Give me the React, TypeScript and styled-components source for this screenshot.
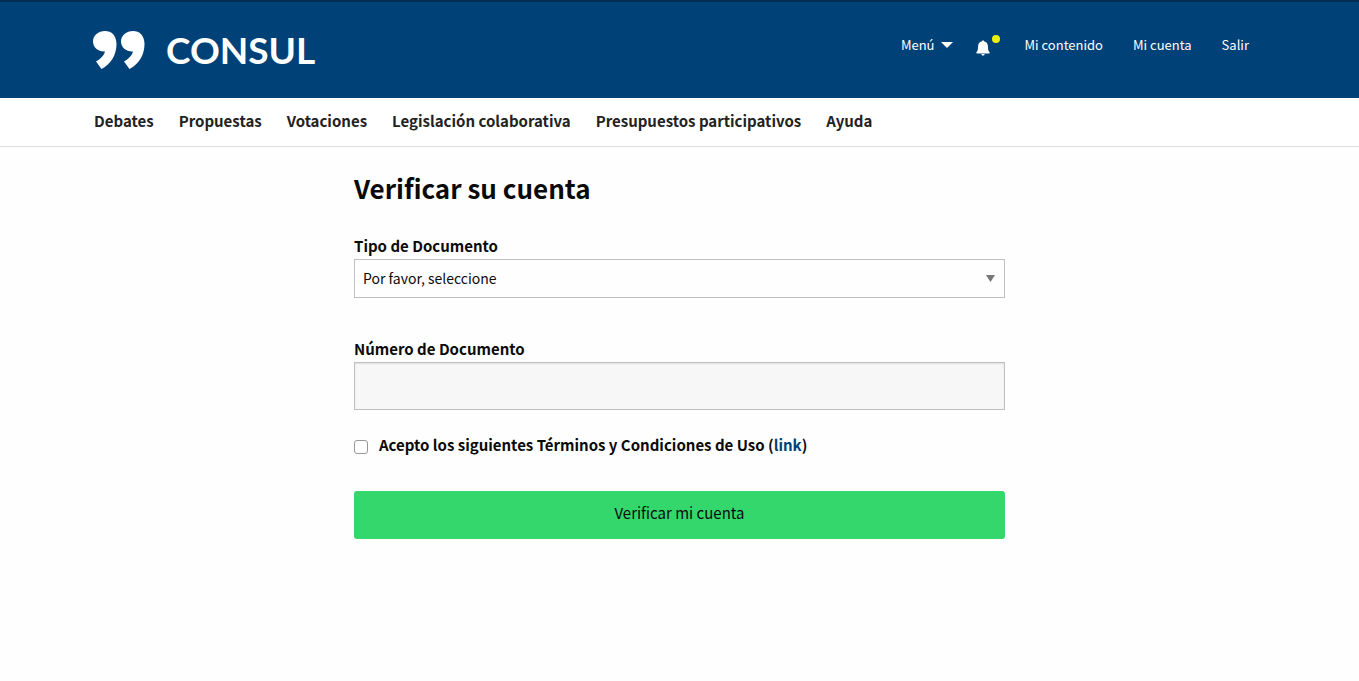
import React from "react";
import styled, { createGlobalStyle } from "styled-components";

const GlobalStyle = createGlobalStyle`
  *, *::before, *::after { box-sizing: border-box; }
  body {
    margin: 0;
    background: #fefefe;
    color: #0a0a0a;
    font-family: "Noto Sans CJK SC", "Noto Sans", sans-serif;
    font-size: 15px;
    line-height: 24px;
  }
  a { text-decoration: none; }
`;

const Container = styled.div`
  max-width: 1171px;
  margin: 0 auto;
`;

const Header = styled.header`
  background: #004178;
  border-top: 2px solid #002d54;
`;

const TopBar = styled(Container)`
  display: flex;
  justify-content: space-between;
  align-items: flex-start;
  height: 96px;
  padding-right: 16px;
`;

const Brand = styled.a`
  display: flex;
  align-items: center;
  gap: 20px;
  margin-top: 27px;
  color: #fff;
  font-family: Lato, sans-serif;
  font-size: 37px;
  font-weight: 700;
  line-height: 42px;
`;

const QuoteMark = styled.svg`
  overflow: visible;
`;

const AccountNav = styled.nav`
  display: flex;
  align-items: center;
  gap: 30px;
  margin-top: 31px;
  font-size: 13px;
`;

const AccountLink = styled.a`
  color: #fff;
`;

const MenuGroup = styled.div`
  display: flex;
  align-items: center;
  gap: 23px;
`;

const MenuButton = styled.button`
  display: flex;
  align-items: center;
  gap: 7px;
  padding: 0;
  border: 0;
  background: none;
  color: #fff;
  font: inherit;
`;

const BellLink = styled.a`
  position: relative;
  display: block;
  width: 18px;
  height: 16px;
  margin-top: 6px;
  svg { display: block; }
`;

const UnreadDot = styled.span`
  position: absolute;
  top: -5px;
  right: -6px;
  width: 8px;
  height: 8px;
  border-radius: 50%;
  background: #ecf00b;
`;

const SectionBar = styled.div`
  background: #fff;
  border-bottom: 1px solid #dedede;
`;

const SectionNav = styled(Container).attrs({ as: "nav" })`
  display: flex;
  flex-wrap: wrap;
  gap: 25px;
  padding: 11px 0 13px;
`;

const SectionLink = styled.a`
  color: #222;
  font-weight: 700;
`;

const Main = styled.main`
  max-width: 651px;
  margin: 0 auto;
  padding-top: 21px;
`;

const Title = styled.h1`
  margin: 0 0 26px;
  font-size: 26px;
  font-weight: 700;
  line-height: 40px;
`;

const Field = styled.div<{ $gap: number }>`
  margin-bottom: ${(p) => p.$gap}px;
`;

const Label = styled.label`
  display: block;
  font-weight: 700;
`;

const SelectWrap = styled.div`
  position: relative;
  margin-top: 1px;
  svg {
    position: absolute;
    top: 16px;
    right: 10px;
    pointer-events: none;
  }
`;

const Select = styled.select`
  display: block;
  width: 100%;
  height: 39px;
  padding: 0 24px 2px 8px;
  appearance: none;
  border: 1px solid #c0c0c0;
  border-radius: 0;
  background: #fefefe;
  color: #0a0a0a;
  font: inherit;
  font-size: 14px;
`;

const TextInput = styled.input`
  display: block;
  width: 100%;
  height: 48px;
  margin-top: 1px;
  padding: 8px;
  border: 1px solid #c0c0c0;
  border-radius: 0;
  background: #f7f7f7;
  box-shadow: inset 0 1px 2px rgba(10, 10, 10, 0.1);
  font: inherit;
`;

const Terms = styled.div`
  display: flex;
  align-items: center;
  gap: 11px;
  margin-bottom: 34px;
  font-weight: 700;
`;

const Checkbox = styled.input`
  width: 14px;
  height: 14px;
  margin: 4px 0 0;
  appearance: none;
  border: 1px solid #999;
  border-radius: 3px;
  background: #fff;
  &:checked { background: #004178; }
`;

const TermsLink = styled.a`
  color: #004178;
`;

const Submit = styled.button`
  display: block;
  width: 100%;
  height: 48px;
  padding: 0 16px 4px;
  border: 0;
  border-radius: 3px;
  background: #34d76c;
  color: #0a0a0a;
  font: inherit;
`;

const sections = [
  "Debates",
  "Propuestas",
  "Votaciones",
  "Legislación colaborativa",
  "Presupuestos participativos",
  "Ayuda",
];

export default function App() {
  return (
    <>
      <GlobalStyle />
      <Header>
        <TopBar>
          <Brand href="#">
            <QuoteMark width="52" height="40" viewBox="0 0 52 40" fill="#fff" aria-hidden="true">
              <path d="M11 1C17.500 1 22.500 5.500 22.500 14C22.500 25 17 34 7.500 39L2 31.500C6.500 29 10 25.500 11 21.500C4.500 22 -1 17.500 -1 11.500C-1 5.500 4.500 1 11 1Z" />
              <path transform="translate(28 0)" d="M11 1C17.500 1 22.500 5.500 22.500 14C22.500 25 17 34 7.500 39L2 31.500C6.500 29 10 25.500 11 21.500C4.500 22 -1 17.500 -1 11.500C-1 5.500 4.500 1 11 1Z" />
            </QuoteMark>
            CONSUL
          </Brand>
          <AccountNav aria-label="Cuenta">
            <MenuGroup>
              <MenuButton type="button">
                Menú
                <svg width="12" height="6" viewBox="0 0 12 6" fill="#fff" aria-hidden="true">
                  <path d="M0 0H12L6 6Z" />
                </svg>
              </MenuButton>
              <BellLink href="#" aria-label="Notificaciones">
                <svg width="14" height="16" viewBox="0 0 14 16" fill="#fff" aria-hidden="true">
                  <path d="M7 .5C7.800.5 8.200 1 8.300 1.500C10.700 2 11.800 3.800 11.900 6C12 9.500 12.300 11 13.500 12V13.500H.5V12C1.700 11 2 9.500 2.100 6C2.200 3.800 3.300 2 5.700 1.500C5.800 1 6.200.5 7 .5ZM5.400 14H8.600C8.500 15 8 15.500 7 15.500C6 15.500 5.500 15 5.400 14Z" />
                </svg>
                <UnreadDot />
              </BellLink>
            </MenuGroup>
            <AccountLink href="#">Mi contenido</AccountLink>
            <AccountLink href="#">Mi cuenta</AccountLink>
            <AccountLink href="#">Salir</AccountLink>
          </AccountNav>
        </TopBar>
      </Header>
      <SectionBar>
        <SectionNav>
          {sections.map((s) => (
            <SectionLink key={s} href="#">{s}</SectionLink>
          ))}
        </SectionNav>
      </SectionBar>
      <Main>
        <Title>Verificar su cuenta</Title>
        <form>
          <Field $gap={39}>
            <Label htmlFor="document-type">Tipo de Documento</Label>
            <SelectWrap>
              <Select id="document-type">
                <option>Por favor, seleccione</option>
              </Select>
              <svg width="9" height="7" viewBox="0 0 9 7" fill="#777" aria-hidden="true">
                <path d="M0 0H9L4.500 7Z" />
              </svg>
            </SelectWrap>
          </Field>
          <Field $gap={23}>
            <Label htmlFor="document-number">Número de Documento</Label>
            <TextInput id="document-number" type="text" />
          </Field>
          <Terms>
            <Checkbox id="terms" type="checkbox" />
            <label htmlFor="terms">
              Acepto los siguientes Términos y Condiciones de Uso (<TermsLink href="#">link</TermsLink>)
            </label>
          </Terms>
          <Submit type="submit">Verificar mi cuenta</Submit>
        </form>
      </Main>
    </>
  );
}
